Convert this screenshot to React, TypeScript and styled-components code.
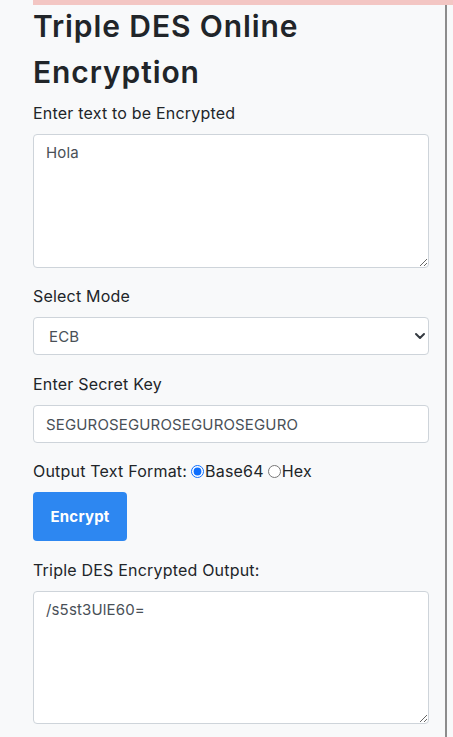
import React, { useState } from "react";
import styled, { createGlobalStyle } from "styled-components";

const Global = createGlobalStyle`
  html, body { margin: 0; padding: 0; background: #f8f9fa; }
  body { font-family: Inter, "Open Sans", sans-serif; color: #212529; }
  * { box-sizing: border-box; }
`;

const Page = styled.div`
  padding-left: 33px;
  min-height: 737px;
  display: flex;
  flex-direction: column;
`;

const TopBar = styled.div`
  position: relative;
  z-index: 1;
  height: 5px;
  background: #f3c6c3;
`;

const Main = styled.main`
  width: 414px;
  flex: 1;
  padding-right: 16px;
  border-right: 2px solid #8c8c8c;
  min-height: 732px;
`;

const Title = styled.h1`
  margin: -2px 0 6px;
  font-size: 30px;
  line-height: 46px;
  font-weight: 600;
  letter-spacing: 0.9px;
  color: #212529;
`;

const Group = styled.div<{ $mb?: number }>`
  margin-bottom: ${(p) => (p.$mb ?? 16)}px;
`;

const Label = styled.label`
  display: block;
  font-size: 16px;
  line-height: 24px;
  letter-spacing: 0.2px;
  margin-bottom: 9px;
  color: #212529;
`;

const fieldBase = `
  display: block;
  width: 100%;
  font-family: Inter, "Open Sans", sans-serif;
  font-size: 15px;
  letter-spacing: 0.15px;
  color: #495057;
  background: #fff;
  border: 1px solid #ced4da;
  border-radius: 4px;
  outline: none;
`;

const TextArea = styled.textarea<{ $h: number }>`
  ${fieldBase}
  height: ${(p) => p.$h}px;
  padding: 6px 12px;
  line-height: 24px;
  resize: vertical;
`;

const SelectWrap = styled.div`
  position: relative;
`;

const Select = styled.select`
  ${fieldBase}
  appearance: none;
  height: 38px;
  padding: 0 12px 0 15px;
`;

const Chevron = styled.svg`
  position: absolute;
  right: 3px;
  top: 14px;
  pointer-events: none;
`;

const Input = styled.input`
  ${fieldBase}
  height: 38px;
  padding: 0 12px;
`;

const FormatRow = styled.div`
  display: flex;
  align-items: center;
  font-size: 16px;
  line-height: 24px;
  letter-spacing: 0.2px;
  margin-bottom: 9px;
`;

const Radio = styled.input`
  margin: 0 1px 0 4px;
  width: 13px;
  height: 13px;
  accent-color: #0d6efd;
`;

const Button = styled.button`
  display: block;
  width: 94px;
  height: 49px;
  border: none;
  border-radius: 4px;
  background: #2d87f1;
  color: #fff;
  font-family: Inter, "Open Sans", sans-serif;
  font-size: 15px;
  font-weight: 700;
  letter-spacing: 0.2px;
  margin-bottom: 17px;
`;

export default function App() {
  const [fmt, setFmt] = useState("base64");
  return (
    <>
      <Global />
      <Page>
        <TopBar />
        <Main>
          <Title>Triple DES Online Encryption</Title>
          <Group>
            <Label>Enter text to be Encrypted</Label>
            <TextArea $h={134} defaultValue="Hola" />
          </Group>
          <Group $mb={17}>
            <Label>Select Mode</Label>
            <SelectWrap>
              <Select defaultValue="ECB">
                <option value="ECB">ECB</option>
                <option value="CBC">CBC</option>
              </Select>
              <Chevron width="12" height="10" viewBox="0 0 12 10">
                <path d="M2 3 L6 7 L10 3" fill="none" stroke="#343a40" strokeWidth="2" strokeLinecap="round" strokeLinejoin="round" />
              </Chevron>
            </SelectWrap>
          </Group>
          <Group>
            <Label>Enter Secret Key</Label>
            <Input defaultValue="SEGUROSEGUROSEGUROSEGURO" />
          </Group>
          <FormatRow>
            Output Text Format:
            <Radio type="radio" name="fmt" checked={fmt === "base64"} onChange={() => setFmt("base64")} />
            Base64
            <Radio type="radio" name="fmt" checked={fmt === "hex"} onChange={() => setFmt("hex")} />
            Hex
          </FormatRow>
          <Button>Encrypt</Button>
          <Group>
            <Label>Triple DES Encrypted Output:</Label>
            <TextArea $h={133} defaultValue="/s5st3UlE60=" />
          </Group>
        </Main>
      </Page>
    </>
  );
}
